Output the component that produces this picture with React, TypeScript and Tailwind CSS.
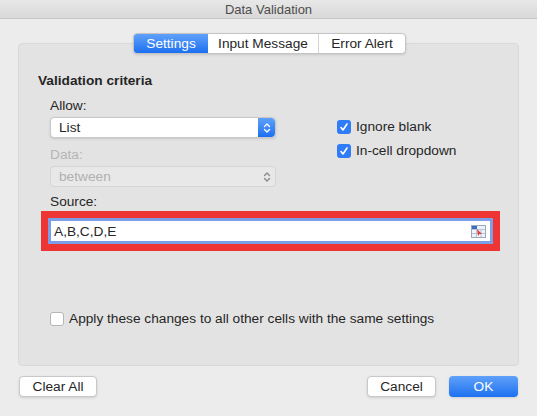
export default function App() {
  return (
    <div
      className="flex h-[416px] w-[537px] flex-col bg-[#ececec] text-[13.7px] leading-[17px] text-[#262626]"
      style={{ fontFamily: '"Liberation Sans", Arial, sans-serif' }}
    >
      {/* Title bar */}
      <div className="flex h-[19px] items-center justify-center border-b border-[#c8c8c8] bg-gradient-to-b from-[#e8e8e8] to-[#d9d9d9] text-[13px] text-[#4d4d4d]">
        Data Validation
      </div>

      <div className="relative mx-[18px] mt-[24px] h-[323px] rounded-[4px] border border-[#d9d9d9] bg-[#e3e3e3]">
        {/* Tabs */}
        <div className="absolute left-[114px] top-[-11px] flex h-[21px] overflow-hidden rounded-[4px] border border-[#c4c4c4] bg-white text-[13.7px] shadow-sm">
          <div className="flex w-[74px] items-center justify-center bg-gradient-to-b from-[#5fa1f9] to-[#1a6ff0] text-white">Settings</div>
          <div className="flex w-[111px] items-center justify-center border-r border-[#d6d6d6]">Input Message</div>
          <div className="flex w-[86px] items-center justify-center">Error Alert</div>
        </div>

        <div className="pl-[19px] pt-[28px] font-bold">Validation criteria</div>

        <div className="flex pl-[31px] pt-[8px]">
          <div className="w-[226px]">
            <div>Allow:</div>
            <div className="mt-[3px] flex h-[21px] items-center justify-between rounded-[4px] border border-[#c8c8c8] bg-white pl-2 shadow-sm">
              <span>List</span>
              <div className="flex h-full w-[17px] items-center justify-center rounded-r-[4px] bg-gradient-to-b from-[#5fa1f9] to-[#1a6ff0]">
                <Chevrons color="white" />
              </div>
            </div>
            <div className="mt-[8px] text-[#b5b5b5]">Data:</div>
            <div className="mt-[3px] flex h-[21px] items-center justify-between rounded-[4px] border border-[#d6d6d6] bg-[#e8e8e8] pl-2 text-[#b0b0b0]">
              <span>between</span>
              <div className="flex w-[17px] items-center justify-center">
                <Chevrons color="#8a8a8a" />
              </div>
            </div>
          </div>
          <div className="ml-[61px] mt-[21px] flex flex-col gap-[7px]">
            <Check checked label="Ignore blank" />
            <Check checked label="In-cell dropdown" />
          </div>
        </div>

        <div className="pl-[31px] pt-[6px]">Source:</div>
        <div className="ml-[22px] mr-[18px] mt-[1px] border-[7px] border-[#ee3534]">
          <div className="flex h-[26px] items-center justify-between border-[3px] border-[#7c9ee6] bg-white pl-[3px] pr-[4px]">
            <span>A,B,C,D,E</span>
            <svg width="15" height="13" viewBox="0 0 15 13">
              <rect x="0.5" y="0.5" width="14" height="12" fill="#eef3fb" stroke="#9aa9c0" />
              <rect x="1" y="1" width="5" height="3" fill="#3c6fc4" />
              <path d="M1 4.5H14M1 8.5H14M5.5 4V12M10 4V12" stroke="#b7c3d6" />
              <path d="M6 4 L11 9 L8.5 9 L7 11 Z" fill="#e23b3b" />
            </svg>
          </div>
        </div>

        <div className="mt-[59px] flex items-center gap-[5px] pl-[31px]">
          <div className="h-[14px] w-[14px] rounded-[3px] border border-[#b5b5b5] bg-white" />
          <span>Apply these changes to all other cells with the same settings</span>
        </div>
      </div>

      <div className="mt-[10px] flex px-[19px]">
        <Button label="Clear All" w="w-[78px]" />
        <div className="ml-auto flex gap-[13px]">
          <Button label="Cancel" w="w-[69px]" />
          <div className="flex h-[21px] w-[69px] items-center justify-center rounded-[4px] bg-gradient-to-b from-[#5fa1f9] to-[#1a6ff0] text-white shadow-sm">
            OK
          </div>
        </div>
      </div>
    </div>
  );
}

function Chevrons({ color }: { color: string }) {
  return (
    <svg width="8" height="12" viewBox="0 0 8 12" fill="none" stroke={color} strokeWidth="1.4" strokeLinecap="round" strokeLinejoin="round">
      <path d="M1.5 4.5 L4 2 L6.5 4.5" />
      <path d="M1.5 7.5 L4 10 L6.5 7.5" />
    </svg>
  );
}

function Check({ checked, label }: { checked?: boolean; label: string }) {
  return (
    <div className="flex items-center gap-[5px]">
      <div className={`flex h-[14px] w-[14px] items-center justify-center rounded-[3px] ${checked ? "bg-[#2f7cf6]" : "border border-[#b5b5b5] bg-white"}`}>
        {checked && (
          <svg width="10" height="10" viewBox="0 0 10 10" fill="none" stroke="white" strokeWidth="1.6" strokeLinecap="round" strokeLinejoin="round">
            <path d="M2 5.5 L4 8 L8 2" />
          </svg>
        )}
      </div>
      <span>{label}</span>
    </div>
  );
}

function Button({ label, w }: { label: string; w: string }) {
  return (
    <div className={`flex h-[21px] ${w} items-center justify-center rounded-[4px] border border-[#c8c8c8] bg-white shadow-sm`}>
      {label}
    </div>
  );
}
